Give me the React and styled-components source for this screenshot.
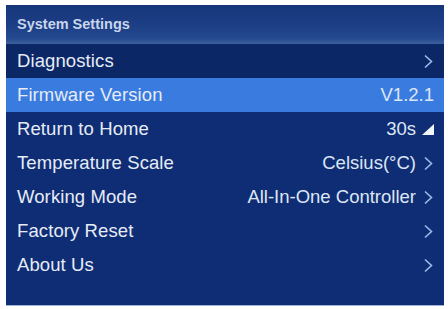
import styled, { createGlobalStyle } from 'styled-components';

const GlobalStyle = createGlobalStyle`
  html, body {
    margin: 0;
    padding: 0;
    background: #ffffff;
  }
  body {
    font-family: "Liberation Sans", Arial, sans-serif;
  }
`;

const items = [
  { label: 'Diagnostics', value: '', mark: 'chevron', dark: true },
  { label: 'Firmware Version', value: 'V1.2.1', mark: 'none', active: true },
  { label: 'Return to Home', value: '30s', mark: 'triangle' },
  { label: 'Temperature Scale', value: 'Celsius(°C)', mark: 'chevron' },
  { label: 'Working Mode', value: 'All-In-One Controller', mark: 'chevron' },
  { label: 'Factory Reset', value: '', mark: 'chevron' },
  { label: 'About Us', value: '', mark: 'chevron' },
];

const Chevron = () => (
  <svg width="10" height="15" viewBox="0 0 10 15">
    <path d="M2 1.5 L8.5 7.5 L2 13.5" fill="none" stroke="#9dbbea" strokeWidth="1.6" />
  </svg>
);

const Triangle = () => (
  <svg width="12" height="11" viewBox="0 0 12 11">
    <path d="M12 0 L12 11 L0 11 Z" fill="#f2f5fb" />
  </svg>
);

const App = () => {
  return (
    <>
      <GlobalStyle />
      <Page>
        <Screen>
          <Header>System Settings</Header>
          <Menu>
            {items.map(item => (
              <Row key={item.label} $active={item.active} $dark={item.dark}>
                <Label>{item.label}</Label>
                <Right>
                  {item.value && <Value>{item.value}</Value>}
                  {item.mark !== 'none' && (
                    <Mark>{item.mark === 'chevron' ? <Chevron /> : <Triangle />}</Mark>
                  )}
                </Right>
              </Row>
            ))}
          </Menu>
        </Screen>
      </Page>
    </>
  );
};

export default App;

const Page = styled.div`
  width: 448px;
  height: 309px;
  padding: 5px 4px 3px 6px;
  box-sizing: border-box;
  background: #ffffff;
`;

const Screen = styled.div`
  height: 100%;
  display: flex;
  flex-direction: column;
  background: #0f2d74;
  border-bottom: 1px solid #9fb3d6;
  box-sizing: border-box;
  overflow: hidden;
`;

const Header = styled.div`
  height: 39px;
  flex: 0 0 39px;
  display: flex;
  align-items: center;
  padding-left: 11px;
  padding-bottom: 2px;
  box-sizing: border-box;
  background: linear-gradient(180deg, #163679 0%, #1d3f86 55%, #25498f 85%, #3d5f9c 100%);
  color: #c9d6ec;
  font-size: 14.5px;
  font-weight: bold;
`;

const Menu = styled.div`
  display: flex;
  flex-direction: column;
`;

const Row = styled.div`
  height: 34px;
  display: flex;
  align-items: center;
  justify-content: space-between;
  padding: 0 10px 0 11px;
  background: ${p => (p.$active ? '#3a7be0' : p.$dark ? '#0c2766' : 'transparent')};
  color: #e6ecf6;
`;

const Label = styled.span`
  font-size: 18.5px;
  letter-spacing: 0.1px;
`;

const Right = styled.div`
  display: flex;
  align-items: center;
  gap: 6px;
`;

const Value = styled.span`
  font-size: 18.5px;
  color: #dde6f4;
`;

const Mark = styled.span`
  display: flex;
  align-items: center;
  width: 12px;
  justify-content: center;
`;
